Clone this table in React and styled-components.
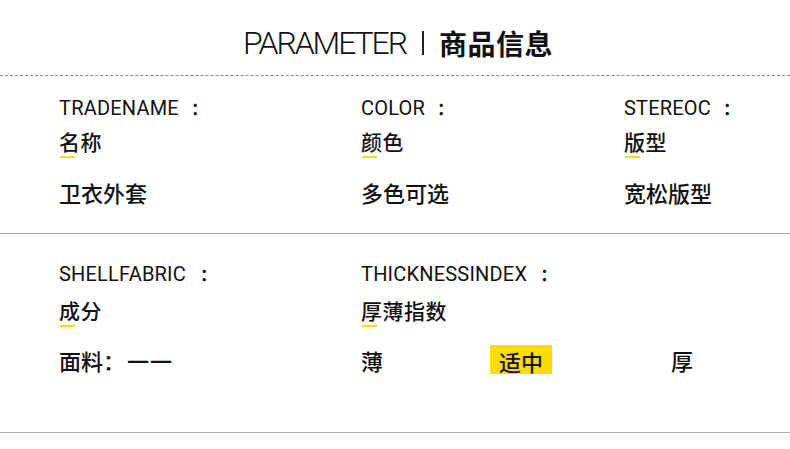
import styled, { createGlobalStyle } from "styled-components";

const GlobalStyle = createGlobalStyle`
  html, body {
    margin: 0;
    padding: 0;
    background: #fff;
  }
  body {
    font-family: "Liberation Sans", Arial, sans-serif;
    color: #111;
  }
`;

const Page = styled.div`
  width: 790px;
  height: 449px;
  background: #fff;
  overflow: hidden;
`;

const Header = styled.header`
  height: 76px;
  display: flex;
  align-items: center;
  justify-content: center;
  border-bottom: 1px dashed #8a8a8a;
  padding-top: 10px;
  padding-left: 6px;
  box-sizing: border-box;
`;

const TitleEn = styled.span`
  font-family: Roboto, "Liberation Sans", sans-serif;
  font-weight: 300;
  font-size: 32px;
  letter-spacing: -2.1px;
  color: #111;
`;

const TitleBar = styled.span`
  display: inline-block;
  width: 2px;
  height: 24px;
  background: #222;
  margin: 0 15px 0 16px;
`;

const TitleCn = styled.span`
  font-family: "Noto Sans CJK SC", sans-serif;
  font-weight: 700;
  font-size: 28px;
  letter-spacing: 0.5px;
  color: #111;
`;

const Section = styled.section`
  display: grid;
  grid-template-columns: 302px 263px 1fr;
  padding: ${(p) => p.$top}px 0 0 59px;
  height: ${(p) => p.$height}px;
  box-sizing: border-box;
  border-bottom: 1px solid #b0b0b0;
`;

const Field = styled.div`
  display: flex;
  flex-direction: column;
  min-width: 0;
`;

const Label = styled.div`
  font-family: Roboto, "Liberation Sans", sans-serif;
  font-size: 20px;
  letter-spacing: 0.2px;
  line-height: 24px;
  color: #111;
  white-space: nowrap;
`;

const Colon = styled.span`
  font-family: "Noto Sans CJK SC", sans-serif;
  font-weight: 700;
  font-size: 17px;
  margin-left: ${(p) => p.$gap || 12}px;
`;

const CnTitle = styled.div`
  position: relative;
  align-self: flex-start;
  font-family: "Noto Sans CJK SC", sans-serif;
  font-weight: 500;
  font-size: 21px;
  letter-spacing: 0.5px;
  line-height: 24px;
  margin-top: ${(p) => p.$gap}px;
  color: #111;

  &::after {
    content: "";
    position: absolute;
    left: 1px;
    bottom: -5px;
    width: 15px;
    height: 2px;
    background: #ffdc00;
  }
`;

const Value = styled.div`
  display: flex;
  align-items: center;
  font-family: "Noto Sans CJK SC", sans-serif;
  font-weight: 500;
  font-size: 22px;
  line-height: 24px;
  margin-top: ${(p) => p.$gap}px;
  color: #111;
  white-space: nowrap;
`;

const Scale = styled.span`
  flex-shrink: 0;
  display: inline-block;
  width: ${(p) => p.$w}px;
`;

const Chip = styled.span`
  flex-shrink: 0;
  display: inline-flex;
  align-items: center;
  justify-content: center;
  height: 29px;
  width: 62px;
  padding-top: 2px;
  box-sizing: border-box;
  background: #ffdc00;
  margin-right: 119px;
`;

const Dash = styled.span`
  margin-left: 2px;
  letter-spacing: 1px;
`;

const Faint = styled.div`
  height: 2px;
  margin-top: 2px;
  background: #f6f6f6;
`;

function ParamField({ label, colonGap, title, value, titleGap, valueGap }) {
  return (
    <Field>
      <Label>
        {label}
        <Colon $gap={colonGap}>：</Colon>
      </Label>
      <CnTitle $gap={titleGap}>{title}</CnTitle>
      <Value $gap={valueGap}>{value}</Value>
    </Field>
  );
}

export default function App() {
  return (
    <Page>
      <GlobalStyle />
      <Header>
        <TitleEn>PARAMETER</TitleEn>
        <TitleBar />
        <TitleCn>商品信息</TitleCn>
      </Header>

      <Section $top={20} $height={158}>
        <ParamField label="TRADENAME" colonGap={12} title="名称" value="卫衣外套" titleGap={9} valueGap={27} />
        <ParamField label="COLOR" colonGap={12} title="颜色" value="多色可选" titleGap={9} valueGap={27} />
        <ParamField label="STEREOC" colonGap={12} title="版型" value="宽松版型" titleGap={9} valueGap={27} />
      </Section>

      <Section $top={28} $height={199}>
        <ParamField
          label="SHELLFABRIC"
          colonGap={14}
          title="成分"
          value={<>面料：<Dash>一一</Dash></>}
          titleGap={12}
          valueGap={26}
        />
        <Field>
          <Label>
            THICKNESSINDEX
            <Colon $gap={13}>：</Colon>
          </Label>
          <CnTitle $gap={12}>厚薄指数</CnTitle>
          <Value $gap={23}>
            <Scale $w={129}>薄</Scale>
            <Chip>适中</Chip>
            <Scale $w={22}>厚</Scale>
          </Value>
        </Field>
      </Section>
      <Faint />
    </Page>
  );
}
